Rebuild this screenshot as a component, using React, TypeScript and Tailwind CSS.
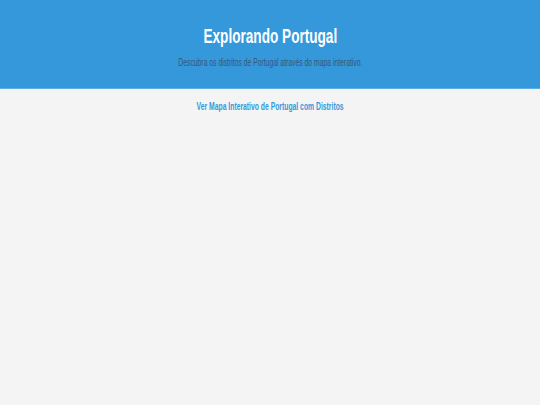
export default function App() {
  return (
    <div className="min-h-[405px] bg-[#f4f4f4]" style={{ fontFamily: '"Liberation Sans", Arial, sans-serif' }}>
      <header className="h-[89px] bg-[#3498db] text-center pt-[22px] border-b border-[#5dade2]">
        <h1 className="text-[20px] font-bold text-white leading-[28px]">
          <span className="inline-block scale-x-[0.68]">Explorando Portugal</span>
        </h1>
        <p className="mt-[6px] text-[10px] text-[#34495e] leading-[14px] opacity-80">
          <span className="inline-block scale-x-[0.68]">Descubra os distritos de Portugal através do mapa interativo.</span>
        </p>
      </header>
      <div className="text-center pt-[4px]">
        <a href="#" className="inline-block scale-x-[0.68] text-[10px] font-bold text-[#3498db] leading-[14px]">Ver Mapa Interativo de Portugal com Distritos</a>
      </div>
    </div>
  );
}
